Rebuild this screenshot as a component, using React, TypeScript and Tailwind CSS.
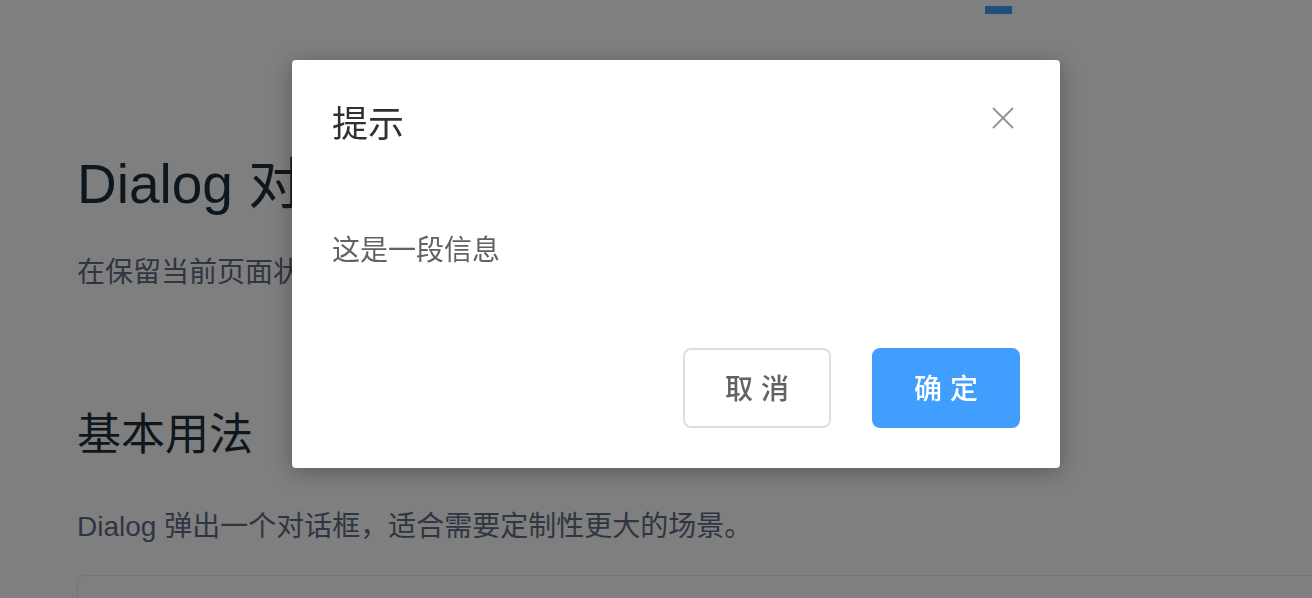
import React from 'react';

const sans = "font-['Liberation_Sans','Noto_Sans_CJK_SC',sans-serif]";

function CloseIcon() {
  return (
    <svg width="22" height="22" viewBox="0 0 22 22" fill="none">
      <path d="M1 1 L21 21 M21 1 L1 21" stroke="#909399" strokeWidth="1.8" />
    </svg>
  );
}

export default function App() {
  return (
    <div className={`relative h-screen w-full overflow-hidden bg-white ${sans}`}>
      {/* page behind the mask */}
      <div className="flex flex-col">
        <div className="ml-[985px] mt-[6px] h-[8px] w-[27px] bg-[#409eff]" />
        <div className="flex flex-col pl-[77px]">
          <h2 className="mt-[138px] text-[55px] leading-[64px] font-normal text-[#1f2f3d] whitespace-nowrap">
            Dialog 对话框
          </h2>
          <p className="mt-[37px] text-[28px] leading-[40px] text-[#5e6d82] whitespace-nowrap">
            在保留当前页面状态的情况下，告知用户并承载相关操作。
          </p>
          <h3 className="mt-[112px] text-[44px] leading-[60px] font-normal text-[#1f2f3d] whitespace-nowrap">
            基本用法
          </h3>
          <p className="mt-[42px] text-[28px] leading-[40px] text-[#5e6d82] whitespace-nowrap">
            Dialog 弹出一个对话框，适合需要定制性更大的场景。
          </p>
          <div className="mt-[28px] h-[120px] w-[1300px] rounded-[6px] border border-[#ebebeb]" />
        </div>
      </div>

      {/* mask + dialog */}
      <div className="fixed inset-0 bg-black/50">
        <div className="ml-[292px] mt-[60px] w-[768px] rounded-[4px] bg-white shadow-[0_4px_24px_rgba(0,0,0,0.3)]">
          <div className="relative px-[40px] pt-[41px] pb-[19px]">
            <span className="block text-[36px] leading-[48px] text-[#303133]">提示</span>
            <button className="absolute right-[46px] top-[47px] flex h-[22px] w-[22px] items-center justify-center">
              <CloseIcon />
            </button>
          </div>
          <div className="px-[40px] pt-[63px] pb-[57px] text-[28px] leading-[40px] text-[#606266]">
            这是一段信息
          </div>
          <div className="flex justify-end gap-[41px] px-[40px] pt-[20px] pb-[40px]">
            <button className="flex h-[80px] w-[148px] items-center justify-center rounded-[8px] border-2 border-[#dcdfe6] bg-white pt-[3px] text-[28px] font-medium text-[#606266]">
              取 消
            </button>
            <button className="flex h-[80px] w-[148px] items-center justify-center rounded-[8px] border-2 border-[#409eff] bg-[#409eff] pt-[3px] text-[28px] font-medium text-white">
              确 定
            </button>
          </div>
        </div>
      </div>
    </div>
  );
}
